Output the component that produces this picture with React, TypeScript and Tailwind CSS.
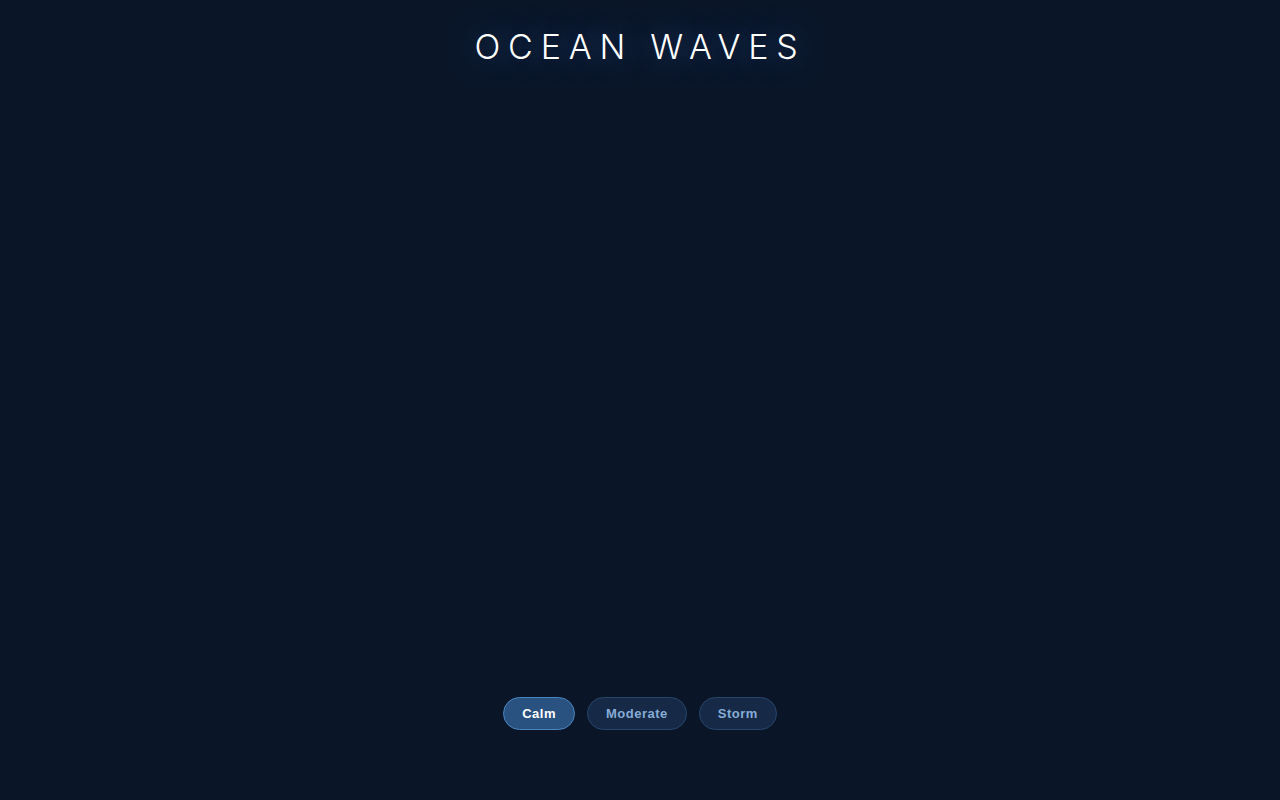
import React, { useState } from 'react';

const modes = ['Calm', 'Moderate', 'Storm'];

export default function App() {
  const [mode, setMode] = useState('Calm');

  return (
    <div
      className="relative flex h-[800px] w-full flex-col items-center bg-[#0a1628] text-white"
      style={{ fontFamily: '"Liberation Sans", Arial, sans-serif' }}
    >
      <h1
        className="mt-[30px] text-[34px] font-light leading-none tracking-[7.8px] text-white [text-shadow:0_0_30px_rgba(70,140,255,0.5)]"
        style={{ fontFamily: 'Inter, "Liberation Sans", sans-serif' }}
      >
        OCEAN WAVES
      </h1>

      <div className="flex-1" />

      <div className="mb-[70px] flex gap-3">
        {modes.map((m) => (
          <button
            key={m}
            onClick={() => setMode(m)}
            className={
              mode === m
                ? 'rounded-full border border-[#4a86c0] bg-[#2a5280] px-[18px] py-[7px] text-[13px] font-bold leading-[17px] tracking-[0.5px] text-white'
                : 'rounded-full border border-[#26466c] bg-[#162a47] px-[18px] py-[7px] text-[13px] font-bold leading-[17px] tracking-[0.5px] text-[#86acd6]'
            }
          >
            {m}
          </button>
        ))}
      </div>
    </div>
  );
}
